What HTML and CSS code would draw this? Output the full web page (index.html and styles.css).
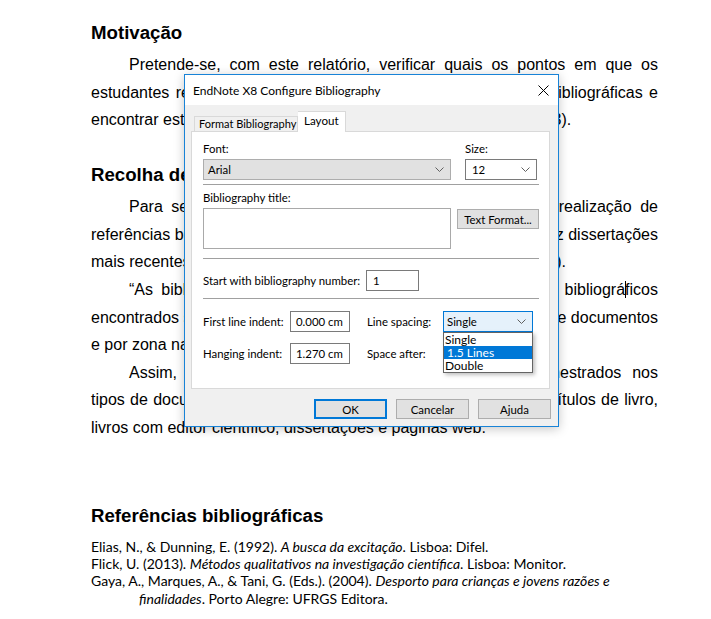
FILE: index.html
```html
<!DOCTYPE html>
<html lang="pt">
<head>
<meta charset="utf-8">
<title>Relatório</title>
<link rel="stylesheet" href="styles.css">
</head>
<body>
<main class="page">
  <h2 class="h first">Motivação</h2>
  <p class="para">
    <span class="ln">Pretende-se, com este relatório, verificar quais os pontos em que os</span>
    <span class="ln">estudantes revelam dificuldades na elaboração de referências bibliográficas e</span>
    <span class="ln last">encontrar estratégias adequadas para as ultrapassar (Fortin, 2013).</span>
  </p>
  <h2 class="h">Recolha de dados</h2>
  <p class="para">
    <span class="ln">Para se perceberem quais as principais dificuldades na realização de</span>
    <span class="ln">referências bibliográficas mais frequentes, analisei também as dez dissertações</span>
    <span class="ln last">mais recentes do repositório da faculdade (Elias &amp; Dunning, 1992).</span>
  </p>
  <p class="para">
    <span class="ln">“As bibliotecas guardam um número elevado de registos bibliográ<span class="caret"></span>ficos</span>
    <span class="ln">encontrados sobre o tema em estudo, organizados por tipologia de documentos</span>
    <span class="ln last">e por zona nacional.”</span>
  </p>
  <p class="para">
    <span class="ln">Assim, foram analisados os trabalhos de alunos de mestrados nos</span>
    <span class="ln">tipos de documentos mais comuns: artigos científicos, livros, capítulos de livro,</span>
    <span class="ln last">livros com editor científico, dissertações e páginas web.</span>
  </p>
  <h2 class="h refs-h">Referências bibliográficas</h2>
  <div class="refs">
    <p class="ref">Elias, N., &amp; Dunning, E. (1992). <i>A busca da excitação</i>. Lisboa: Difel.</p>
    <p class="ref">Flick, U. (2013). <i>Métodos qualitativos na investigação científica</i>. Lisboa: Monitor.</p>
    <p class="ref">Gaya, A., Marques, A., &amp; Tani, G. (Eds.). (2004). <i>Desporto para crianças e jovens razões e finalidades</i>. Porto Alegre: UFRGS Editora.</p>
  </div>
</main>

<section class="dialog">
  <header class="titlebar">
    <span class="title">EndNote X8 Configure Bibliography</span>
    <svg class="close" width="11" height="11" viewBox="0 0 11 11"><path d="M0.5 0.5 L10.5 10.5 M10.5 0.5 L0.5 10.5" stroke="#000" stroke-width="1" fill="none"/></svg>
  </header>
  <div class="dbody">
    <div class="tabs">
      <div class="tab">Format Bibliography</div>
      <div class="tab active">Layout</div>
    </div>
    <div class="pane">
      <div class="row-font">
        <div class="fld fld-font">
          <label class="lbl">Font:</label>
          <div class="select gray"><span>Arial</span><svg class="chev" width="9" height="5" viewBox="0 0 9 5"><path d="M0.5 0.5 L4.5 4.5 L8.5 0.5" stroke="#606060" fill="none"/></svg></div>
        </div>
        <div class="fld fld-size">
          <label class="lbl">Size:</label>
          <div class="select white"><span>12</span><svg class="chev" width="9" height="5" viewBox="0 0 9 5"><path d="M0.5 0.5 L4.5 4.5 L8.5 0.5" stroke="#606060" fill="none"/></svg></div>
        </div>
      </div>
      <hr class="sep sep1">
      <label class="lbl bt-lbl">Bibliography title:</label>
      <div class="row-title">
        <div class="textarea"></div>
        <div class="btn tf">Text Format...</div>
      </div>
      <hr class="sep sep2">
      <div class="row-start">
        <label class="lbl">Start with bibliography number:</label>
        <div class="input num">1</div>
      </div>
      <hr class="sep sep3">
      <div class="grid-ind">
        <label class="lbl">First line indent:</label>
        <div class="input cm">0.000 cm</div>
        <label class="lbl ls">Line spacing:</label>
        <div class="combo">
          <div class="select blue"><span>Single</span><svg class="chev" width="9" height="5" viewBox="0 0 9 5"><path d="M0.5 0.5 L4.5 4.5 L8.5 0.5" stroke="#606060" fill="none"/></svg></div>
          <ul class="list">
            <li>Single</li>
            <li class="hl">1.5 Lines</li>
            <li>Double</li>
          </ul>
        </div>
        <label class="lbl">Hanging indent:</label>
        <div class="input cm">1.270 cm</div>
        <label class="lbl ls">Space after:</label>
        <div></div>
      </div>
    </div>
    <div class="buttons">
      <div class="btn ok">OK</div>
      <div class="btn">Cancelar</div>
      <div class="btn">Ajuda</div>
    </div>
  </div>
</section>
</body>
</html>
```
FILE: styles.css
```css
html, body {
  margin: 0;
  padding: 0;
  background: #fff;
}
body {
  width: 711px;
  height: 619px;
  overflow: hidden;
  position: relative;
}
.page {
  width: 567px;
  padding-left: 91px;
  font-family: "Liberation Sans", Arial, sans-serif;
  color: #000;
}
.h {
  font-size: 18.67px;
  line-height: 22px;
  font-weight: bold;
  margin: 30px 0 7.2px 0;
}
.h.first { margin-top: 22px; }
.h.refs-h { margin-top: 63.4px; margin-bottom: 11.5px; }
.para {
  margin: 0;
  font-size: 16px;
  line-height: 27.6px;
}
.ln {
  display: block;
  text-align: justify;
  text-align-last: justify;
  white-space: nowrap;
}
.ln:first-child { text-indent: 38px; }
.ln.last { text-align-last: left; }
.caret {
  display: inline-block;
  width: 1px;
  height: 17px;
  background: #000;
  vertical-align: -3px;
  margin: 0 -1px 0 0;
}
.refs {
  font-family: Lato, "Liberation Sans", sans-serif;
  font-size: 14px;
  line-height: 17px;
}
.ref {
  margin: 0;
  padding-left: 48px;
  text-indent: -48px;
  width: 500px;
}
.ref:last-child { line-height: 18px; }

/* dialog */
.dialog {
  position: absolute;
  left: 184px;
  top: 74px;
  width: 373px;
  height: 351px;
  border: 1px solid #1883d7;
  background: #f0f0f0;
  box-shadow: 0 2px 10px rgba(0,0,0,0.22);
  font-family: Lato, "Noto Sans", sans-serif;
  font-size: 11.4px;
  color: #000;
  display: flex;
  flex-direction: column;
  white-space: nowrap;
}
.titlebar {
  height: 30px;
  background: #fff;
  display: flex;
  align-items: center;
  padding: 0 9px 0 8px;
  justify-content: space-between;
}
.title { font-size: 12px; }
.close { margin-top: 1px; }
.dbody {
  flex: 1;
  display: flex;
  flex-direction: column;
  padding: 0 8px 0 6px;
}
.tabs {
  height: 26px;
  display: flex;
  align-items: flex-end;
  padding-left: 3px;
}
.tab {
  box-sizing: border-box;
  height: 15px;
  line-height: 14px;
  padding: 0 0 0 4px;
  border: 1px solid #d9d9d9;
  border-bottom: none;
  background: #f0f0f0;
  width: 104px;
  font-size: 11px;
}
.tab.active {
  width: 48px;
  height: 21px;
  line-height: 18px;
  background: #fff;
  margin-bottom: -1px;
  position: relative;
  z-index: 1;
  padding: 0 0 0 6px;
  border-left: none;
  font-size: 11.6px;
}
.pane {
  box-sizing: border-box;
  height: 258px;
  background: #fff;
  border: 1px solid #d9d9d9;
  padding: 10px 9px 0 11px;
}
.lbl {
  display: block;
  line-height: 14px;
  color: #000;
}
.row-font {
  display: flex;
  gap: 14px;
}
.fld-font { width: 248px; }
.fld-size { width: 72px; }
.fld .lbl { margin-bottom: 3px; }
.select {
  height: 21px;
  box-sizing: border-box;
  display: flex;
  align-items: center;
  justify-content: space-between;
  padding: 0 6px 0 4px;
}
.select.gray { background: #e1e1e1; border: 1px solid #adadad; }
.select.white { background: #fff; border: 1px solid #7a7a7a; padding-left: 6px; }
.select.blue { background: #e5f1fb; border: 1px solid #0078d7; padding-left: 3px; }
.chev { display: block; }
.sep {
  border: none;
  height: 1px;
  background: #a0a0a0;
  margin: 0;
  width: 336px;
}
.sep1 { margin-top: 4px; }
.bt-lbl { margin-top: 6px; margin-bottom: 3px; }
.row-title {
  display: flex;
  gap: 6px;
  align-items: flex-start;
}
.textarea {
  width: 248px;
  height: 41px;
  box-sizing: border-box;
  border: 1px solid #a9a9a9;
  background: #fff;
}
.btn {
  height: 20px;
  box-sizing: border-box;
  border: 1px solid #adadad;
  background: #e1e1e1;
  display: flex;
  align-items: center;
  justify-content: center;
}
.btn.tf { width: 82px; margin-top: 1px; }
.sep2 { margin-top: 9px; }
.row-start {
  margin-top: 11px;
  height: 21px;
  display: flex;
  align-items: center;
}
.row-start .lbl { width: 163px; }
.input {
  height: 21px;
  box-sizing: border-box;
  border: 1px solid #7a7a7a;
  background: #fff;
  display: flex;
  align-items: center;
  padding-left: 6px;
}
.input.num { width: 53px; }
.sep3 { margin-top: 7px; }
.grid-ind {
  margin-top: 12px;
  display: grid;
  grid-template-columns: 87px 60px 93px 90px;
  grid-template-rows: 21px 21px;
  row-gap: 11px;
  align-items: center;
}
.ls { padding-left: 17px; }
.input.cm { width: 60px; padding-left: 5px; }
.combo { position: relative; height: 21px; }
.list {
  position: absolute;
  left: 0;
  top: 21px;
  width: 90px;
  box-sizing: border-box;
  margin: 0;
  padding: 0;
  list-style: none;
  background: #fff;
  border: 1px solid #646464;
  box-shadow: 2px 2px 4px rgba(0,0,0,0.25);
  z-index: 2;
  font-size: 12px;
}
.list li {
  height: 13px;
  line-height: 13px;
  padding-left: 1px;
}
.list li.hl {
  background: #0078d7;
  color: #fff;
  padding-left: 3px;
}
.buttons {
  display: flex;
  justify-content: flex-end;
  gap: 9px;
  margin-top: 10px;
  margin-right: -1px;
}
.buttons .btn { width: 73px; }
.btn.ok { border: 2px solid #0078d7; }
```
